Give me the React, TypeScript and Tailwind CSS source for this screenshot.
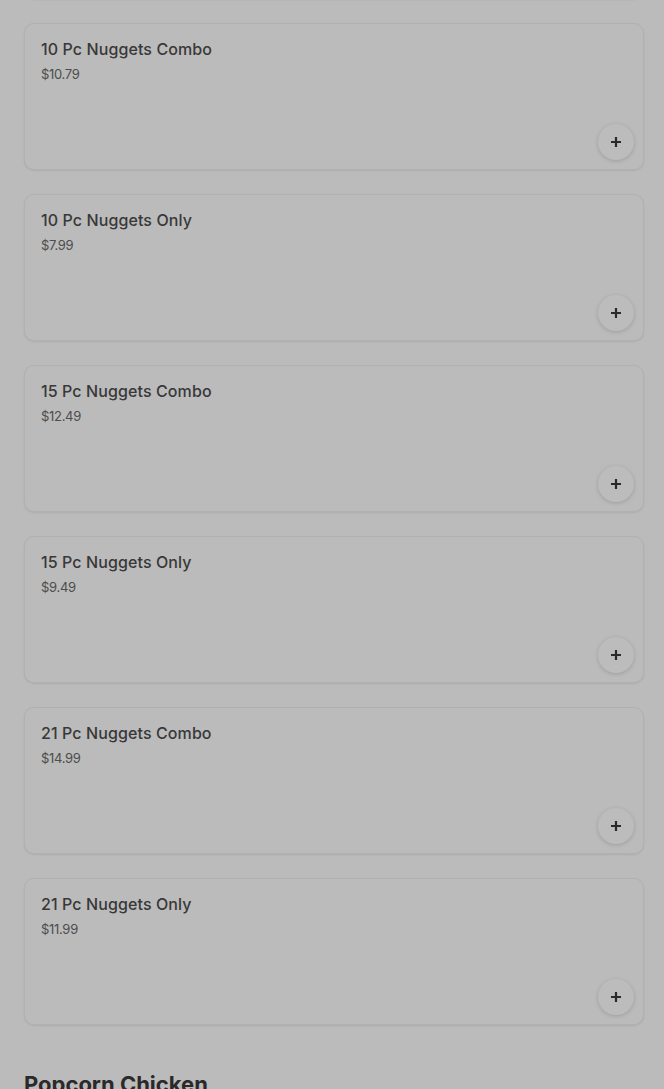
import React from "react";

const items = [
  { name: "10 Pc Nuggets Combo", price: "$10.79" },
  { name: "10 Pc Nuggets Only", price: "$7.99" },
  { name: "15 Pc Nuggets Combo", price: "$12.49" },
  { name: "15 Pc Nuggets Only", price: "$9.49" },
  { name: "21 Pc Nuggets Combo", price: "$14.99" },
  { name: "21 Pc Nuggets Only", price: "$11.99" },
];

const cardCls =
  "relative h-[147px] rounded-[10px] border border-[#b1b1b1] bg-[#bbbbbb] shadow-[0_1px_2px_rgba(0,0,0,0.08)]";

function Card({ name, price }: { name: string; price: string }) {
  return (
    <div className={cardCls + " px-4 pt-[15px]"}>
      <div className="text-[16px] leading-5 font-medium text-[#383838] tracking-[0.1px]">{name}</div>
      <div className="mt-[7px] text-[13px] leading-4 text-[#4d4d4d] tracking-[-0.3px]">{price}</div>
      <div className="absolute right-[9px] bottom-[9px] w-9 h-9 rounded-full bg-[#bcbcbc] shadow-[0_1px_4px_rgba(0,0,0,0.16)] flex items-center justify-center">
        <svg width="12" height="12" viewBox="0 0 12 12">
          <path d="M6 1v10M1 6h10" stroke="#2a2a2a" strokeWidth="2.2" />
        </svg>
      </div>
    </div>
  );
}

export default function App() {
  return (
    <div
      className="w-[664px] h-[1089px] overflow-hidden bg-[#bbbbbb] pl-6 pr-5"
      style={{ fontFamily: "Inter, 'Noto Sans', sans-serif" }}
    >
      <div className="-mt-[148px] flex flex-col gap-[24px]">
        <div className={cardCls} />
        {items.map((it) => (
          <Card key={it.name} name={it.name} price={it.price} />
        ))}
      </div>
      <div className="mt-[45px] text-[22px] leading-7 font-bold text-[#2a2a2a]">Popcorn Chicken</div>
    </div>
  );
}
